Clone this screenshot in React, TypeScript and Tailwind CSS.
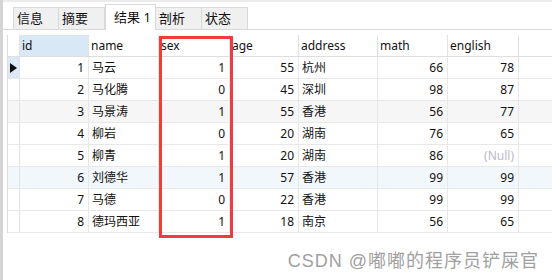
const cols = [
  { key: "id", w: "w-[69px]", num: true },
  { key: "name", w: "w-[70px]", num: false },
  { key: "sex", w: "w-[71px]", num: true },
  { key: "age", w: "w-[69px]", num: true },
  { key: "address", w: "w-[79px]", num: false },
  { key: "math", w: "w-[70px]", num: true },
  { key: "english", w: "w-[71px]", num: true },
];

const rows = [
  ["1", "马云", "1", "55", "杭州", "66", "78"],
  ["2", "马化腾", "0", "45", "深圳", "98", "87"],
  ["3", "马景涛", "1", "55", "香港", "56", "77"],
  ["4", "柳岩", "0", "20", "湖南", "76", "65"],
  ["5", "柳青", "1", "20", "湖南", "86", null],
  ["6", "刘德华", "1", "57", "香港", "99", "99"],
  ["7", "马德", "0", "22", "香港", "99", "99"],
  ["8", "德玛西亚", "1", "18", "南京", "56", "65"],
];

const tabs = ["信息", "摘要", "结果 1", "剖析", "状态"];

function rowBg(i: number) {
  if (i === 2) return "bg-[#f6f6f6]";
  if (i === 5) return "bg-[#f2f7fc]";
  return "bg-white";
}

export default function App() {
  return (
    <div
      className="relative flex h-[280px] w-[552px] overflow-hidden bg-white text-[12px] text-[#111]"
      style={{ fontFamily: '"Noto Sans", "Noto Sans CJK SC", sans-serif' }}
    >
      <div className="w-[3px] shrink-0 bg-[#d4d4d4]" />
      <div className="flex flex-1 flex-col">
        <div className="h-[2px] bg-[#ebebeb]" />
        <div className="flex h-[28px] items-end border-b border-[#d9d9d9] pl-[10px]">
          {tabs.map((t, i) =>
            i === 2 ? (
              <div
                key={t}
                className="-mb-px flex h-[26px] w-[51px] items-center border border-b-0 border-[#d9d9d9] bg-white pl-[8px] text-[13px]"
              >
                {t}
              </div>
            ) : (
              <div
                key={t}
                className="flex h-[22px] w-[46px] items-center border border-b-0 border-l-0 border-[#d9d9d9] bg-[#f0f0f0] pl-[3px] text-[13px] first:border-l"
              >
                {t}
              </div>
            )
          )}
        </div>
        <div className="ml-[4px] mt-[5px] flex flex-col border-l border-[#dcdcdc]">
          <div className="flex h-[22px] border-b border-[#dedede]">
            <div className="w-[12px] border-r border-[#e2e2e2]" />
            {cols.map((c, i) => (
              <div
                key={c.key}
                className={`${c.w} flex items-center border-r border-[#e2e2e2] px-[2px] ${i === 0 ? "bg-[#d9e8f6]" : ""}`}
              >
                {c.key}
              </div>
            ))}
          </div>
          {rows.map((r, i) => (
            <div key={i} className={`flex h-[22px] border-b border-[#e8e8e8] ${rowBg(i)}`}>
              <div
                className={`flex w-[12px] items-center justify-center border-r border-[#e2e2e2] ${i === 0 ? "bg-[#dce9f7]" : ""}`}
              >
                {i === 0 && (
                  <svg width="7" height="10" viewBox="0 0 7 10">
                    <path d="M0 0 L7 5 L0 10 Z" fill="#111" />
                  </svg>
                )}
              </div>
              {cols.map((c, j) => (
                <div
                  key={c.key}
                  className={`${c.w} flex items-center border-r border-[#e8e8e8] ${c.num ? "justify-end pr-[4px]" : "pl-[3px]"}`}
                >
                  {r[j] === null ? <span className="text-[#b9b9cc]">(Null)</span> : r[j]}
                </div>
              ))}
            </div>
          ))}
        </div>
        <div
          className="mt-[15px] pr-[13px] text-right text-[18px] tracking-[1px] text-[#a0a0a0]"
          style={{ fontFamily: '"Liberation Sans", "Noto Sans CJK SC", sans-serif' }}
        >
          CSDN @嘟嘟的程序员铲屎官
        </div>
      </div>
      <div className="pointer-events-none absolute left-[159px] top-[36px] h-[202px] w-[74px] border-[3px] border-[#f03c3c]" />
    </div>
  );
}
